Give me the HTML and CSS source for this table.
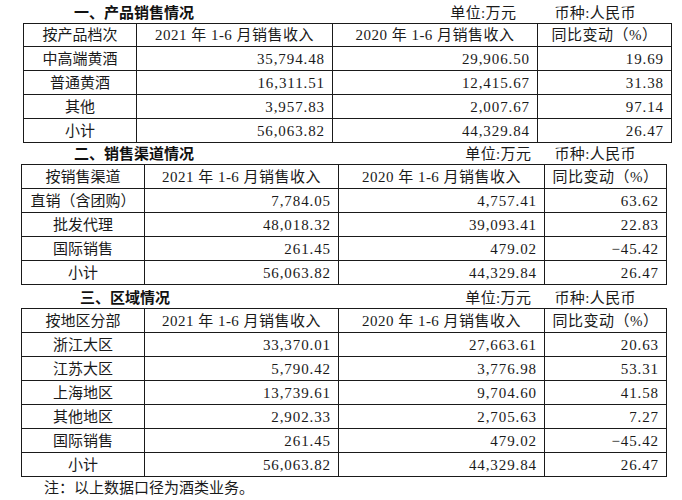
FILE: index.html
```html
<!DOCTYPE html>
<html lang="zh">
<head>
<meta charset="utf-8">
<link rel="stylesheet" href="styles.css">
</head>
<body>
<div class="page">
  <div class="caption cap-1">
    <span class="title t1">一、产品销售情况</span>
    <span class="unit">单位:万元</span>
    <span class="cur">币种:人民币</span>
  </div>
  <table class="grid g1">
    <colgroup><col class="c1"><col class="c2"><col class="c3"><col class="c4"></colgroup>
    <tr class="hd"><td class="name">按产品档次</td><td class="h">2021 年 1-6 月销售收入</td><td class="h">2020 年 1-6 月销售收入</td><td class="h">同比变动（%）</td></tr>
    <tr><td class="name">中高端黄酒</td><td class="num">35,794.48</td><td class="num">29,906.50</td><td class="num">19.69</td></tr>
    <tr><td class="name">普通黄酒</td><td class="num">16,311.51</td><td class="num">12,415.67</td><td class="num">31.38</td></tr>
    <tr><td class="name">其他</td><td class="num">3,957.83</td><td class="num">2,007.67</td><td class="num">97.14</td></tr>
    <tr><td class="name">小计</td><td class="num">56,063.82</td><td class="num">44,329.84</td><td class="num">26.47</td></tr>
  </table>

  <div class="caption cap-2">
    <span class="title t2">二、销售渠道情况</span>
    <span class="unit">单位:万元</span>
    <span class="cur">币种:人民币</span>
  </div>
  <table class="grid g2">
    <colgroup><col class="d1"><col class="d2"><col class="d3"><col class="d4"></colgroup>
    <tr class="hd"><td class="name">按销售渠道</td><td class="h">2021 年 1-6 月销售收入</td><td class="h">2020 年 1-6 月销售收入</td><td class="h">同比变动（%）</td></tr>
    <tr><td class="name">直销（含团购）</td><td class="num">7,784.05</td><td class="num">4,757.41</td><td class="num">63.62</td></tr>
    <tr><td class="name">批发代理</td><td class="num">48,018.32</td><td class="num">39,093.41</td><td class="num">22.83</td></tr>
    <tr><td class="name">国际销售</td><td class="num">261.45</td><td class="num">479.02</td><td class="num">−45.42</td></tr>
    <tr><td class="name">小计</td><td class="num">56,063.82</td><td class="num">44,329.84</td><td class="num">26.47</td></tr>
  </table>

  <div class="caption cap-3">
    <span class="title t3">三、区域情况</span>
    <span class="unit">单位:万元</span>
    <span class="cur">币种:人民币</span>
  </div>
  <table class="grid g3">
    <colgroup><col class="d1"><col class="d2"><col class="d3"><col class="d4"></colgroup>
    <tr class="hd"><td class="name">按地区分部</td><td class="h">2021 年 1-6 月销售收入</td><td class="h">2020 年 1-6 月销售收入</td><td class="h">同比变动（%）</td></tr>
    <tr><td class="name">浙江大区</td><td class="num">33,370.01</td><td class="num">27,663.61</td><td class="num">20.63</td></tr>
    <tr><td class="name">江苏大区</td><td class="num">5,790.42</td><td class="num">3,776.98</td><td class="num">53.31</td></tr>
    <tr><td class="name">上海地区</td><td class="num">13,739.61</td><td class="num">9,704.60</td><td class="num">41.58</td></tr>
    <tr><td class="name">其他地区</td><td class="num">2,902.33</td><td class="num">2,705.63</td><td class="num">7.27</td></tr>
    <tr><td class="name">国际销售</td><td class="num">261.45</td><td class="num">479.02</td><td class="num">−45.42</td></tr>
    <tr><td class="name">小计</td><td class="num">56,063.82</td><td class="num">44,329.84</td><td class="num">26.47</td></tr>
  </table>

  <p class="note">注：以上数据口径为酒类业务。</p>
</div>
</body>
</html>
```

FILE: styles.css
```css
html, body {
  margin: 0;
  padding: 0;
  background: #fff;
}

body {
  font-family: "Liberation Serif", "Noto Sans CJK SC", serif;
  font-size: 15px;
  color: #1a1a1a;
  width: 682px;
  height: 500px;
  overflow: hidden;
}

.page {
  display: flex;
  flex-direction: column;
}

.caption {
  display: flex;
  align-items: flex-end;
  box-sizing: border-box;
  padding-right: 46px;
  line-height: 20px;
}

.cap-1 { height: 23px; padding-bottom: 0; }
.cap-2 { height: 21px; padding-bottom: 0; }
.cap-3 { height: 23px; padding-bottom: 0; }

.title {
  font-weight: bold;
  font-size: 15px;
  margin-right: auto;
  color: #111;
}

.t1 { margin-left: 74px; }
.t2 { margin-left: 74px; }
.t3 { margin-left: 80px; }

.unit, .cur { letter-spacing: 0.4px; }

.cap-1 .unit { margin-right: 38px; }
.cap-2 .unit, .cap-3 .unit { margin-right: 23px; }

.grid {
  border-collapse: collapse;
  table-layout: fixed;
}

.grid td {
  border: 1px solid #1a1a1a;
  padding: 0;
  height: 23px;
  white-space: nowrap;
  overflow: hidden;
  line-height: 20px;
}

.g1 { margin-left: 23px; width: 648px; }
.g2, .g3 { margin-left: 21px; width: 645px; }

.g1 .c1 { width: 113px; }
.g1 .c2 { width: 196px; }
.g1 .c3 { width: 205px; }
.g1 .c4 { width: 134px; }

.d1 { width: 123px; }
.d2 { width: 194px; }
.d3 { width: 206px; }
.d4 { width: 122px; }

.grid .hd td { height: 22px; }
.g3 .hd td, .g3 td { height: 23px; }
.g2 .hd td { height: 23px; }

.name, .h {
  text-align: center;
}

.h { letter-spacing: 0.5px; }

.num {
  text-align: right;
  padding-right: 7px !important;
  letter-spacing: 0.9px;
}

.note {
  margin: 0;
  padding-left: 44px;
  height: 24px;
  line-height: 22px;
}
```
